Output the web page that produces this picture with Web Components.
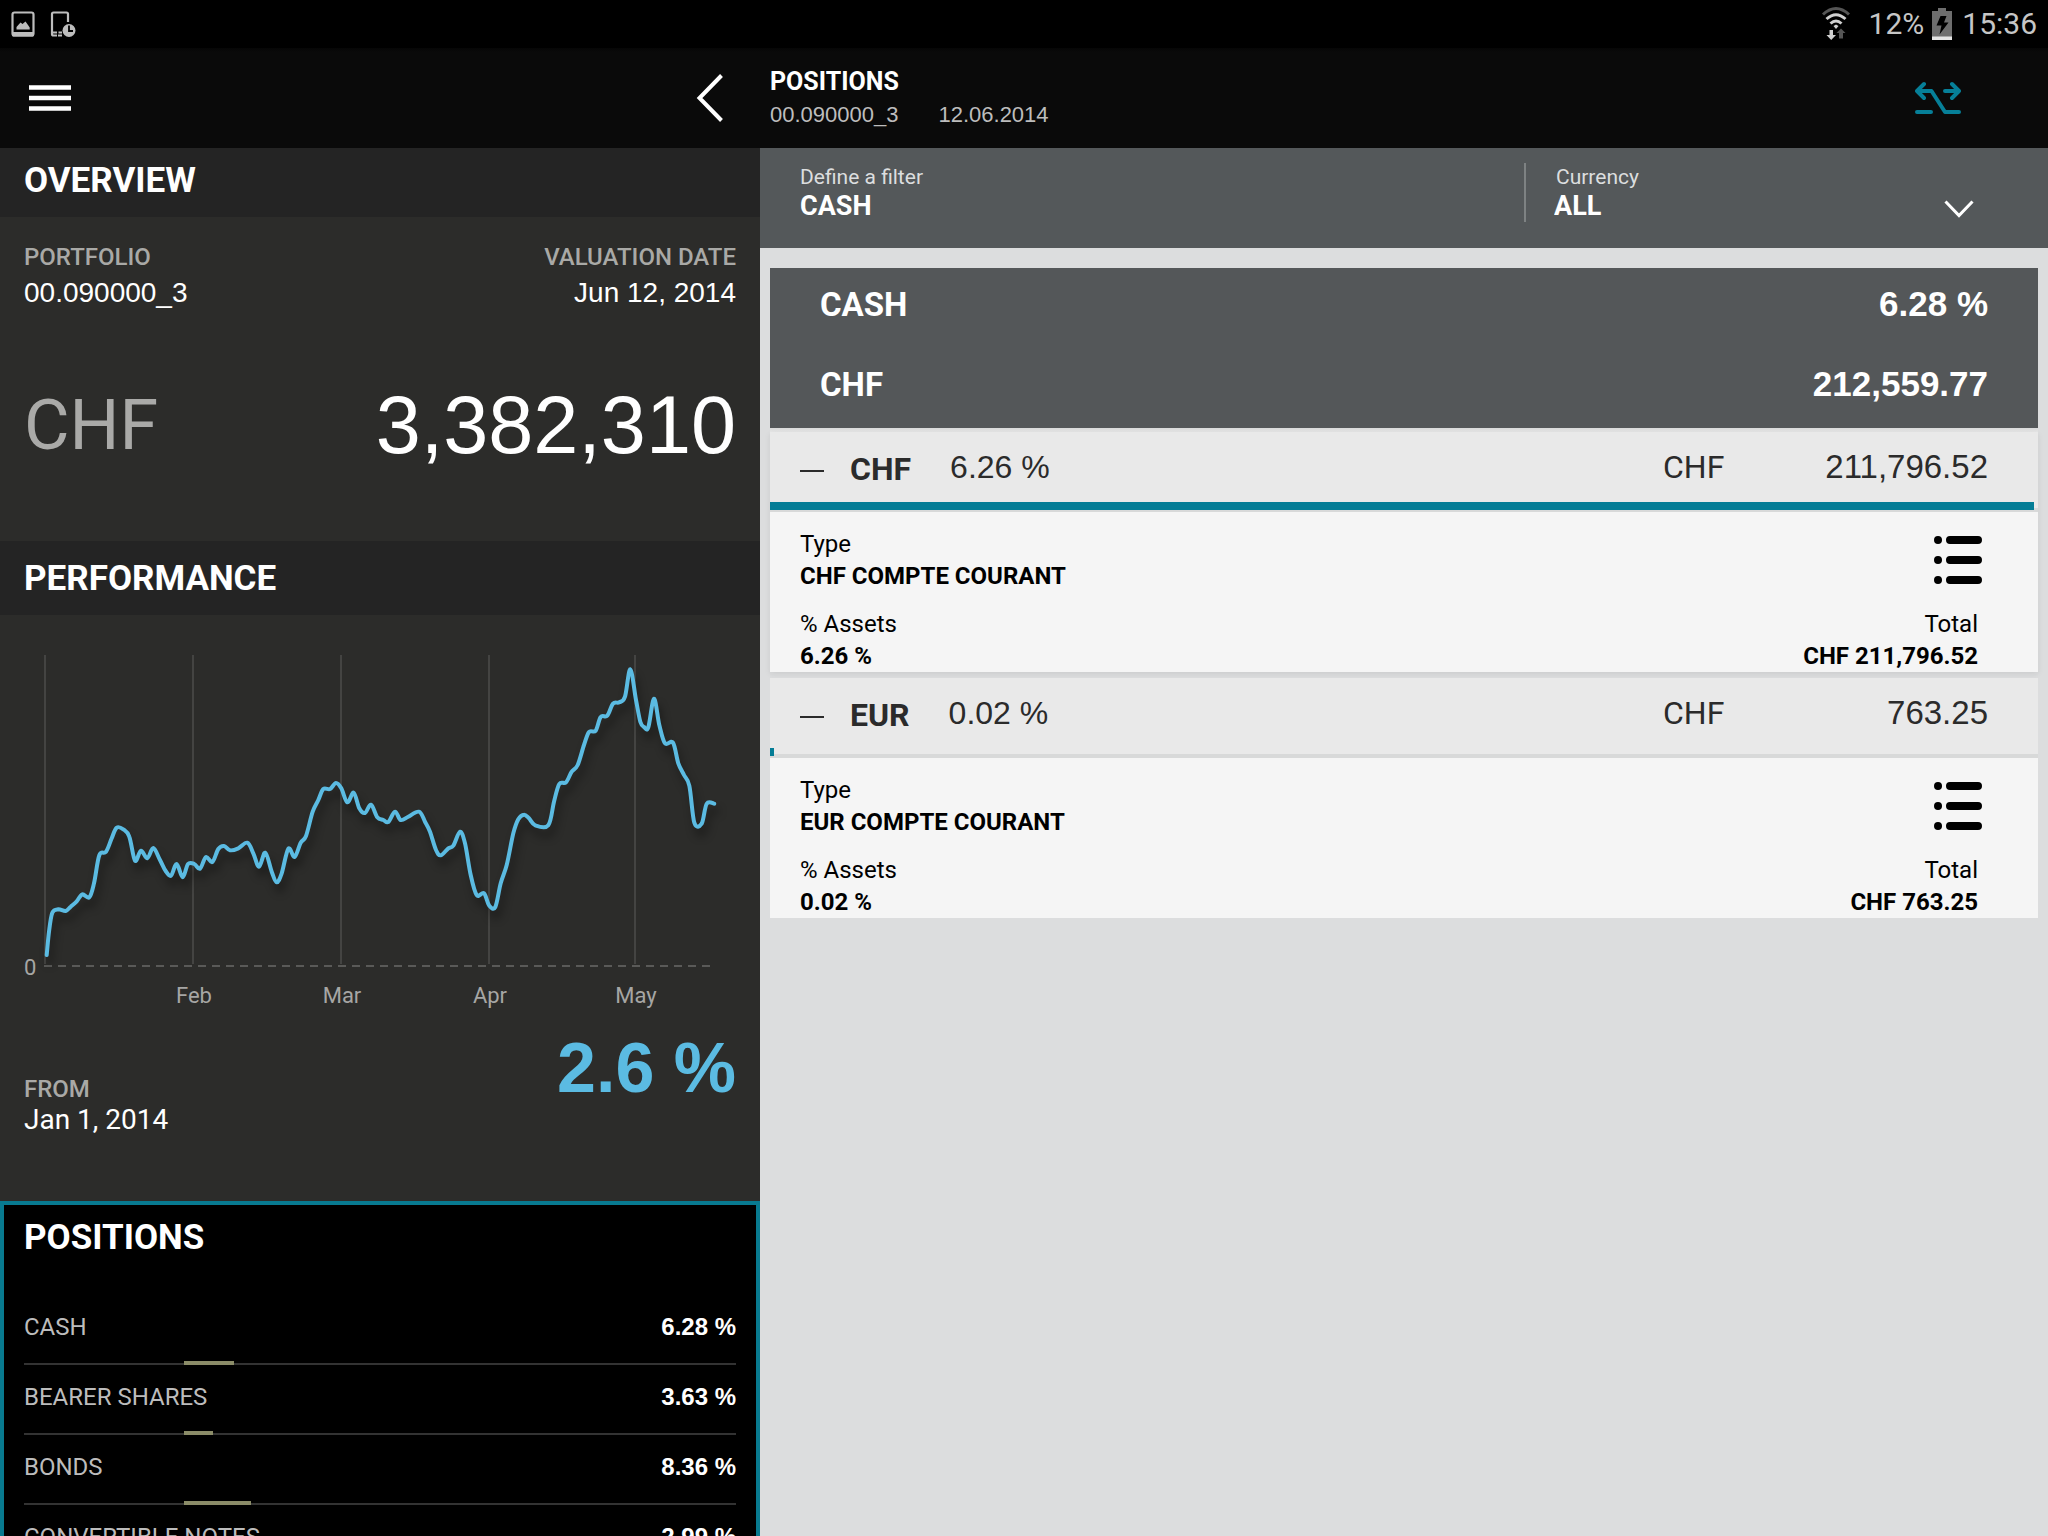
<!DOCTYPE html>
<html lang="en">
<head>
<meta charset="utf-8">
<meta name="viewport" content="width=device-width, initial-scale=1">
<title>Positions</title>
<style>
html, body { margin: 0; height: 100%; background: #000; }
body { font-family: Roboto, "Liberation Sans", sans-serif; overflow: hidden; }
</style>
</head>
<body>
<portfolio-app></portfolio-app>

<script>
const BASE = `
  *, *::before, *::after { box-sizing: border-box; }
  h1, h2, h3, p, ul, li, dl, dt, dd { margin: 0; padding: 0; }
  ul { list-style: none; }
  svg { display: block; }
  button { font: inherit; color: inherit; background: none; border: 0; padding: 0; margin: 0; cursor: pointer; }
  .num { font-family: "Liberation Sans", Arial, sans-serif; }
`;

class Base extends HTMLElement {
  connectedCallback() {
    if (this.shadowRoot) return;
    const root = this.attachShadow({ mode: 'open' });
    root.innerHTML = `<style>${BASE}${this.styles()}</style>${this.markup()}`;
  }
}

/* Android status bar */
class StatusBar extends Base {
  styles() { return `
    :host { display: flex; align-items: center; justify-content: space-between; height: 48px; padding: 0 11px 0 10px; background: #000; color: #c6c6c6; font-size: 30px; line-height: 50px; }
    div { display: flex; align-items: center; }
    .left { gap: 12px; }
    .wifi { margin-right: 18px; }
    .battery { margin: 0 10px 0 8px; }
  `; }
  markup() { return `
    <div class="left">
      <svg width="28" height="32" viewBox="0 0 28 32" role="img" aria-label="Screenshot saved">
        <rect x="2.5" y="4.500" width="21" height="23" rx="2" fill="none" stroke="#bdbdbd" stroke-width="2.200"/>
        <path d="M2 24h22v3q0 1.500-1.500 1.500h-19Q2 28.500 2 27z" fill="#bdbdbd"/>
        <path d="M6.500 21.500v-2.500l4-4.500 2 1.500 3-2.500 2.500 3.500 1.700 2.500v2z" fill="#bdbdbd"/>
      </svg>
      <svg width="28" height="32" viewBox="0 0 28 32" role="img" aria-label="Device scheduled">
        <path d="M18 14V6q0-1.500-1.500-1.500h-13Q2 4.500 2 6v20q0 1.500 1.500 1.500H7M2 24.500h5M8.500 24.500H12M8 27.500h4" fill="none" stroke="#bdbdbd" stroke-width="2.200"/>
        <circle cx="19" cy="22.500" r="6.500" fill="#bdbdbd"/>
        <path d="M19 17.500v5.500h4" fill="none" stroke="#000" stroke-width="1.800"/>
      </svg>
    </div>
    <div>
      <svg class="wifi" width="30" height="36" viewBox="0 0 30 36" role="img" aria-label="Wi-Fi">
        <g fill="none" stroke-width="3">
          <path d="M2 8.500Q15-3.500 28 8.500" stroke="#555"/>
          <path d="M5.500 13Q15 4.500 24.500 13" stroke="#d0d0d0"/>
          <path d="M9.500 17.500Q15 12.500 20.500 17.500" stroke="#d0d0d0"/>
        </g>
        <path d="M12.500 20l2.500-1.500 2.500 1.500-2.500 3z" fill="#d0d0d0"/>
        <path d="M8.500 24h3.500v5h3l-4.800 5-4.700-5h3z" fill="#d0d0d0"/>
        <path d="M20 22.500l4.500 4.500h-2.500v5.500h-4v-5.500h-2.500z" fill="#555"/>
      </svg>
      <span>12%</span>
      <svg class="battery" width="20" height="34" viewBox="0 0 20 34" role="img" aria-label="Charging">
        <path d="M6 1h8v3h6v29H0V4h6z" fill="#6e6e6e"/>
        <path d="M0 29.500h20V33H0z" fill="#e4e4e4"/>
        <path d="M8.500 9h6l-2.500 6.500h4.500L7.500 27.500 9.500 18.500H4.500z" fill="#000"/>
      </svg>
      <span>15:36</span>
    </div>
  `; }
}

/* Application bar */
class AppBar extends Base {
  styles() { return `
    :host { display: grid; grid-template-columns: 760fr 1288fr; height: 100px; background: linear-gradient(#060606, #0a0a0a 4px); color: #fff; }
    .nav { display: flex; justify-content: space-between; align-items: center; padding: 0 36px 0 29px; }
    .head { display: flex; justify-content: space-between; align-items: flex-start; padding: 17px 87px 0 10px; }
    h1 { font-size: 25px; line-height: 34px; font-weight: 700; }
    p { display: flex; gap: 40px; font-size: 22px; line-height: 32px; color: #bdbdbd; }
    .compare { margin-top: 15px; }
  `; }
  markup() { return `
    <div class="nav">
      <button aria-label="Menu"><svg width="42" height="28" viewBox="0 0 42 28"><path d="M0 3.500h42M0 14h42M0 24.500h42" stroke="#fff" stroke-width="4.500"/></svg></button>
      <button aria-label="Back"><svg width="28" height="48" viewBox="0 0 28 48"><path d="M25.500 1.500L3.500 24l22 22.500" fill="none" stroke="#fff" stroke-width="4"/></svg></button>
    </div>
    <div class="head">
      <div>
        <h1>POSITIONS</h1>
        <p class="num"><span>00.090000_3</span><span>12.06.2014</span></p>
      </div>
      <button class="compare" aria-label="Compare">
        <svg width="46" height="36" viewBox="0 0 46 36" fill="none" stroke="#067f98" stroke-width="4" stroke-linecap="round" stroke-linejoin="round">
          <path d="M9 4L2 11l7 7M2 11h14.500L30 32h14"/><path d="M30 11h14M37 4l7 7-7 7M2 32h14"/>
        </svg>
      </button>
    </div>
  `; }
}

/* Titled block of the left column; "active" draws the selection frame */
class SidePanel extends Base {
  styles() { return `
    :host { display: block; background: #2c2c2a; color: #fff; }
    h2 { font-size: 35px; line-height: 66px; padding: 5px 24px 3px; font-weight: 700; background: #242424; }
    :host([flush]) h2 { padding-top: 0; }
    .body { padding: 0 24px; }
    :host([active]) { background: #000; border: 4px solid #087a90; border-bottom: 0; flex: 1; }
    :host([active]) h2 { background: none; padding: 0 20px 24px; }
    :host([active]) .body { padding: 0 20px; }
  `; }
  markup() { return `<h2>${this.getAttribute('heading')}</h2><div class="body"><slot></slot></div>`; }
}

class PortfolioSummary extends Base {
  styles() { return `
    :host { display: block; padding: 22px 0 70px; }
    .meta, .total { display: flex; justify-content: space-between; }
    .meta > :last-child { text-align: right; }
    dt { font-size: 24px; line-height: 36px; font-weight: 500; color: #a9a9a6; }
    dd { font-size: 28px; line-height: 36px; }
    .total { margin-top: 68px; align-items: center; line-height: 92px; }
    .cur { font-size: 70px; color: #aaaaa8; }
    .sum { font-size: 81px; }
  `; }
  markup() { return `
    <dl class="meta">
      <div><dt>PORTFOLIO</dt><dd class="num">00.090000_3</dd></div>
      <div><dt>VALUATION DATE</dt><dd class="num">Jun 12, 2014</dd></div>
    </dl>
    <p class="total"><span class="cur">CHF</span><span class="num sum">3,382,310</span></p>
  `; }
}

/* Performance curve; the series is given in thirds of a plot unit */
const SERIES = [
  140,1005, 147,935, 157,878, 175,868, 197,873, 212,860, 230,844, 247,823, 268,832, 282,790, 298,706, 318,695, 335,655, 350,623, 370,628, 388,650,
  405,722, 423,692, 442,715, 460,684, 480,720, 497,753, 513,767, 530,732, 548,772, 564,732, 583,732, 600,746, 618,711, 637,726,
  655,687, 672,678, 690,691, 715,685, 742,668, 760,700, 777,740, 796,698, 815,755, 830,787, 845,760, 865,686, 884,711, 902,668,
  918,648, 938,575, 955,540, 970,507, 990,507, 1008,489, 1024,505, 1042,547, 1061,518, 1078,565, 1095,579, 1113,554, 1132,592,
  1150,600, 1165,606, 1185,575, 1202,600, 1225,590, 1257,575, 1275,605, 1290,635, 1308,690, 1322,706, 1345,685, 1360,677, 1380,635,
  1395,670, 1412,765, 1430,825, 1452,820, 1468,857, 1486,861, 1502,790, 1520,735, 1540,640, 1555,598, 1572,584, 1587,595,
  1606,616, 1645,616, 1662,545, 1678,492, 1698,487, 1715,455, 1733,435, 1752,375, 1767,336, 1787,332, 1802,291, 1822,287,
  1839,251, 1858,247, 1875,230, 1891,148, 1908,240, 1921,305, 1932,321, 1945,322, 1962,236, 1978,315, 1995,370, 2019,368, 2035,430,
  2052,465, 2068,497, 2083,608, 2105,611, 2120,551, 2143,551
];
function curve(values) {
  const p = [];
  for (let i = 0; i < values.length; i += 2) p.push([values[i] / 3, values[i + 1] / 3]);
  let d = `M${p[0][0].toFixed(1)} ${p[0][1].toFixed(1)}`;
  for (let i = 0; i < p.length - 1; i++) {
    const a = p[i - 1] || p[i], b = p[i], c = p[i + 1], e = p[i + 2] || c;
    const q = [b[0] + (c[0] - a[0]) / 6, b[1] + (c[1] - a[1]) / 6, c[0] - (e[0] - b[0]) / 6, c[1] - (e[1] - b[1]) / 6, c[0], c[1]];
    d += 'C' + q.map(n => n.toFixed(1)).join(' ');
  }
  return d;
}
class PerformanceChart extends Base {
  styles() { return `
    :host { display: block; margin: 0 -24px; }
    svg { width: 100%; height: auto; }
    text { font-size: 22px; fill: #a6a6a4; }
    .line { filter: drop-shadow(3px 8px 4px rgba(0,0,0,.4)); }
    .foot { display: flex; justify-content: space-between; align-items: flex-start; padding: 6px 24px 65px; }
    dl { padding-top: 48px; }
    dt { font-size: 24px; line-height: 30px; font-weight: 500; color: #a9a9a6; }
    dd { font-size: 28px; line-height: 32px; }
    strong { font-size: 70px; line-height: 84px; color: #5bbbe2; }
  `; }
  markup() {
    const months = [[193, 'Feb'], [341, 'Mar'], [489, 'Apr'], [635, 'May']];
    return `
    <svg viewBox="0 -5 760 405" role="img" aria-label="Performance since January">
      <g stroke="#444442" stroke-width="2"><path d="M45 35v309"/>${months.map(([x]) => `<path d="M${x} 35v309"/>`).join('')}</g>
      <path d="M44 346h668" stroke="#5a5a58" stroke-width="2" stroke-dasharray="8 6"/>
      <path class="line" d="${curve(SERIES)}" fill="none" stroke="#5bbbe2" stroke-width="4" stroke-linecap="round" stroke-linejoin="round"/>
      <text x="24" y="355">0</text>
      ${months.map(([x, m]) => `<text x="${x + 1}" y="383" text-anchor="middle">${m}</text>`).join('')}
    </svg>
    <div class="foot">
      <dl><dt>FROM</dt><dd>Jan 1, 2014</dd></dl>
      <strong class="num">2.6 %</strong>
    </div>`;
  }
}

class AllocationList extends Base {
  styles() { return `
    :host { display: block; }
    li { position: relative; display: flex; justify-content: space-between; height: 70px; border-bottom: 2px solid #333; font-size: 24px; line-height: 64px; color: #bcbcbc; }
    li::after { content: ""; position: absolute; left: 22.500%; bottom: -2px; height: 4px; width: calc(var(--share) * 1.117%); background: #8b8c68; }
    strong { color: #fff; }
  `; }
  markup() {
    const rows = [['CASH', '6.28'], ['BEARER SHARES', '3.63'], ['BONDS', '8.36'], ['CONVERTIBLE NOTES', '2.99']];
    return `<ul>${rows.map(([n, v]) => `<li style="--share:${v}"><span>${n}</span><strong class="num">${v} %</strong></li>`).join('')}</ul>`;
  }
}

class FilterBar extends Base {
  styles() { return `
    :host { display: grid; grid-template-columns: 764fr 524fr; height: 100px; padding-top: 15px; background: #54585a; color: #fff; }
    .field { display: flex; flex-direction: column; padding-left: 40px; }
    .currency { height: 59px; padding-left: 28px; border-left: 2px solid #7e8283; }
    label { font-size: 21px; line-height: 28px; color: #dcdedf; }
    .currency label { padding-left: 2px; }
    input, select { display: block; width: 100%; height: 30px; margin: 0; padding: 0; border: 0; border-radius: 0; outline: 0; appearance: none; background: none; color: #fff; font: 700 27px/30px Roboto, sans-serif; }
    .pick { display: grid; align-items: center; padding-right: 74px; }
    .pick > * { grid-area: 1 / 1; }
    svg { justify-self: end; pointer-events: none; margin-top: 6px; }
  `; }
  markup() { return `
    <div class="field"><label for="filter">Define a filter</label><input id="filter" type="text" value="CASH"></div>
    <div class="field currency"><label for="currency">Currency</label>
      <div class="pick"><select id="currency"><option>ALL</option><option>CHF</option><option>EUR</option></select>
        <svg width="30" height="18" viewBox="0 0 30 18"><path d="M1.500 1.500L15 15.500l13.500-14" fill="none" stroke="#fff" stroke-width="3"/></svg></div>
    </div>
  `; }
}

class GroupTotal extends Base {
  styles() { return `
    :host { display: block; padding: 0 50px; margin-top: 20px; background: #545759; color: #fff; font-weight: 700; }
    h2, p { display: flex; justify-content: space-between; height: 80px; line-height: 74px; font-size: 33px; }
    .num { font-size: 35px; line-height: 72px; }
  `; }
  markup() { return `<h2><span>CASH</span><span class="num">6.28 %</span></h2><p><span>CHF</span><span class="num">212,559.77</span></p>`; }
}

class PositionItem extends Base {
  styles() { return `
    :host { display: block; background: #f5f5f5; margin-bottom: 6px; box-shadow: 0 2px 6px rgba(0,0,0,.08); }
    :host(:last-of-type) { margin-bottom: 0; box-shadow: none; }
    header { position: relative; display: flex; align-items: flex-start; height: 80px; padding: 0 50px 0 30px; background: #e9e9e9; border-bottom: 4px solid #d8d9d9; color: #2b2b2b; font-size: 32px; line-height: 70px; }
    header::after { content: ""; position: absolute; left: 0; bottom: -2px; height: 8px; width: var(--fill); background: #047d96; }
    .toggle { display: flex; align-items: center; gap: 26px; line-height: 74px; font-weight: 700; }
    .share { margin-left: 39px; flex: 1; }
    .amount { display: flex; justify-content: space-between; width: 325px; }
    .amount .num { font-size: 33px; }
    .detail { display: flex; justify-content: space-between; padding: 16px 56px 0 30px; color: #000; font-size: 24px; line-height: 32px; }
    dl { display: grid; gap: 16px; }
    dd { font-weight: 700; }
    .right { display: flex; flex-direction: column; justify-content: space-between; align-items: flex-end; }
    .right dl { padding-right: 4px; text-align: right; }
    .menu { margin-top: 8px; }
  `; }
  markup() {
    const a = n => this.getAttribute(n);
    this.style.setProperty('--fill', (Number(a('share')) / 6.28 * 100).toFixed(2) + '%');
    return `
    <header>
      <button class="toggle" aria-expanded="true"><svg width="24" height="6" viewBox="0 0 24 6"><path d="M0 5h24" stroke="#2b2b2b" stroke-width="2"/></svg><span>${a('currency')}</span></button>
      <span class="share num">${a('share')} %</span>
      <div class="amount"><span>CHF</span><span class="num">${a('amount')}</span></div>
    </header>
    <div class="detail">
      <dl><div><dt>Type</dt><dd>${a('currency')} COMPTE COURANT</dd></div><div><dt>% Assets</dt><dd>${a('share')} %</dd></div></dl>
      <div class="right">
        <button class="menu" aria-label="Details"><svg width="48" height="48" viewBox="0 0 48 48"><path d="M16 4h28M16 24h28M16 44h28M4 4h.01M4 24h.01M4 44h.01" stroke="#000" stroke-width="8" stroke-linecap="round"/></svg></button>
        <dl><div><dt>Total</dt><dd>CHF ${a('amount')}</dd></div></dl>
      </div>
    </div>`;
  }
}

class PortfolioApp extends Base {
  styles() { return `
    :host { display: flex; flex-direction: column; height: 100vh; }
    main { flex: 1; min-height: 0; display: grid; grid-template-columns: 760fr 1288fr; overflow: hidden; }
    aside { display: flex; flex-direction: column; min-width: 0; min-height: 0; overflow: hidden; background: #2c2c2a; }
    side-panel { flex-shrink: 0; }
    .content { min-width: 0; background: #dcddde; }
    .list { padding: 0 10px; }
    .items { padding-top: 4px; background: linear-gradient(#d9dada, #e6e6e6 4px, #dcddde 10px); }
  `; }
  markup() { return `
    <status-bar></status-bar>
    <app-bar></app-bar>
    <main>
      <aside>
        <side-panel heading="OVERVIEW" flush><portfolio-summary></portfolio-summary></side-panel>
        <side-panel heading="PERFORMANCE"><performance-chart></performance-chart></side-panel>
        <side-panel heading="POSITIONS" active><allocation-list></allocation-list></side-panel>
      </aside>
      <section class="content">
        <filter-bar></filter-bar>
        <div class="list">
          <group-total></group-total>
          <div class="items">
            <position-item currency="CHF" share="6.26" amount="211,796.52"></position-item>
            <position-item currency="EUR" share="0.02" amount="763.25"></position-item>
          </div>
        </div>
      </section>
    </main>
  `; }
}

customElements.define('status-bar', StatusBar);
customElements.define('app-bar', AppBar);
customElements.define('side-panel', SidePanel);
customElements.define('portfolio-summary', PortfolioSummary);
customElements.define('performance-chart', PerformanceChart);
customElements.define('allocation-list', AllocationList);
customElements.define('filter-bar', FilterBar);
customElements.define('group-total', GroupTotal);
customElements.define('position-item', PositionItem);
customElements.define('portfolio-app', PortfolioApp);
</script>
</body>
</html>
